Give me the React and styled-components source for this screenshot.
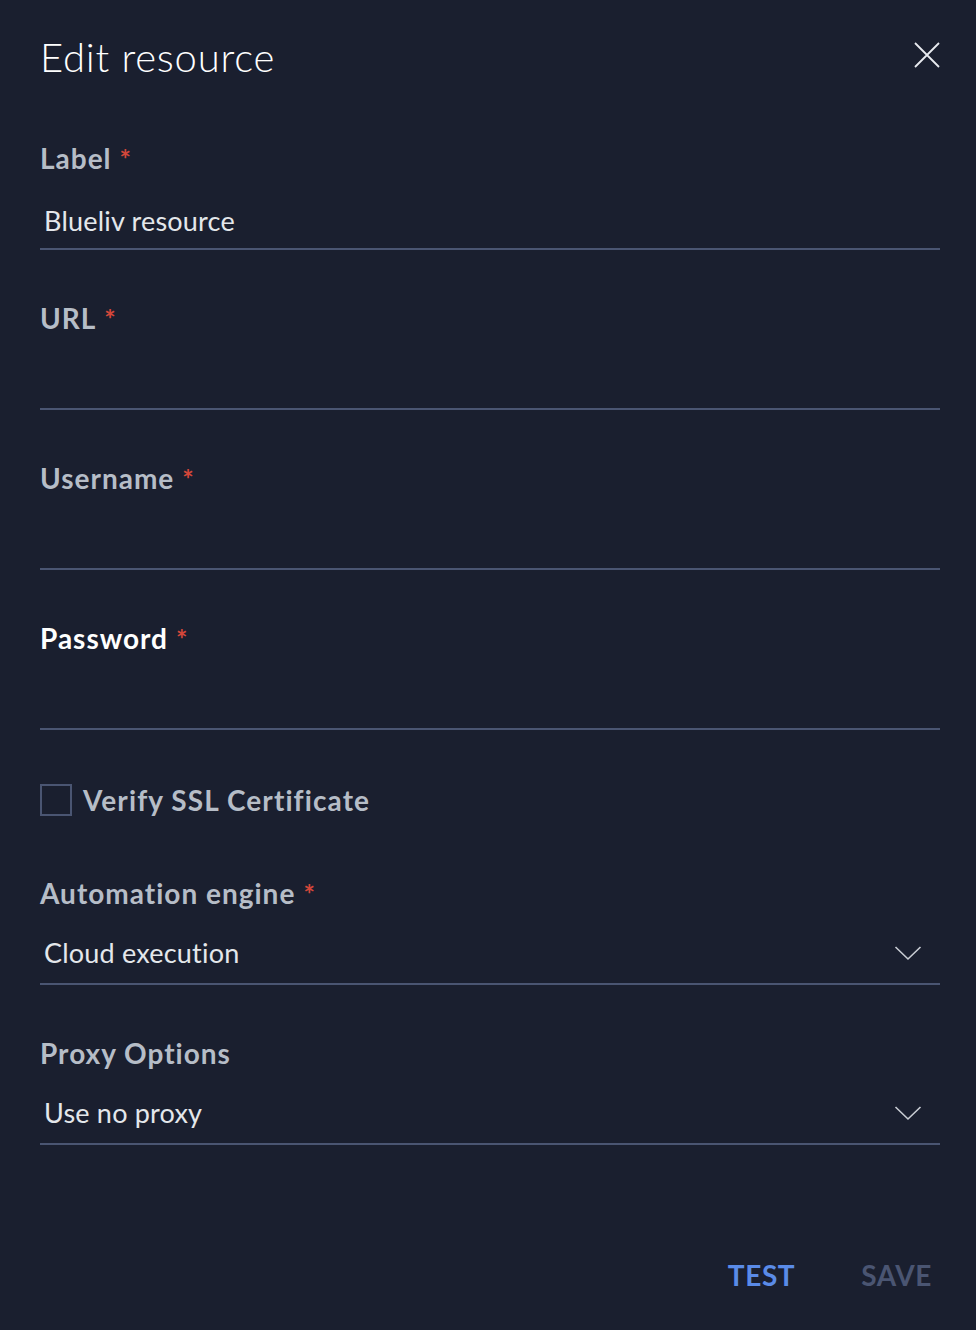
import styled, { createGlobalStyle } from "styled-components";

const GlobalStyle = createGlobalStyle`
  html, body {
    margin: 0;
    padding: 0;
    background: #1a1f2f;
  }
  * {
    box-sizing: border-box;
  }
`;

const Dialog = styled.div`
  width: 976px;
  min-height: 1330px;
  background: #1a1f2f;
  padding: 38px 36px 0 40px;
  font-family: Lato, "Liberation Sans", sans-serif;
  color: #e4e7eb;
`;

const Header = styled.div`
  display: flex;
  justify-content: space-between;
  align-items: center;
  height: 40px;
  margin-bottom: 64px;
`;

const Title = styled.h1`
  margin: 0 0 2px;
  font-size: 40px;
  font-weight: 300;
  line-height: 40px;
  color: #ffffff;
  letter-spacing: 0.75px;
`;

const CloseButton = styled.button`
  background: none;
  border: 0;
  padding: 0;
  margin: 0 -1px 6px 0;
  width: 28px;
  height: 28px;
  display: flex;
  align-items: center;
  justify-content: center;
  cursor: pointer;
`;

const Field = styled.div`
  display: flex;
  flex-direction: column;
  margin-bottom: ${(p) => p.$gap ?? 52}px;
`;

const Label = styled.label`
  font-size: 28px;
  line-height: 32px;
  height: 32px;
  font-weight: 700;
  color: ${(p) => (p.$active ? "#ffffff" : "#b6bdc7")};
  letter-spacing: 1px;
`;

const Required = styled.span`
  color: #d4473a;
  margin-left: 8px;
  font-size: 27px;
  font-weight: 700;
  letter-spacing: 0;
`;

const InputBox = styled.div`
  display: flex;
  align-items: center;
  justify-content: space-between;
  padding: ${(p) => (p.$select ? "27px 18px 13px 4px" : "30px 18px 10px 4px")};
  border-bottom: 2px solid #4a5572;
`;

const Value = styled.span`
  font-size: 27px;
  line-height: 34px;
  height: 34px;
  font-weight: 400;
  color: #e4e7eb;
  letter-spacing: 0.2px;
`;

const CheckRow = styled.label`
  display: flex;
  align-items: center;
  gap: 11px;
  margin-top: 54px;
  margin-bottom: 61px;
  height: 32px;
`;

const Box = styled.span`
  width: 32px;
  height: 32px;
  border: 2px solid #4a5572;
  display: inline-block;
`;

const CheckText = styled.span`
  font-size: 28px;
  font-weight: 700;
  color: #b6bdc7;
  letter-spacing: 1.1px;
`;

const Footer = styled.div`
  display: flex;
  justify-content: flex-end;
  gap: 50px;
  margin-top: 110px;
`;

const ActionButton = styled.button`
  background: none;
  border: 0;
  height: 40px;
  padding: 0 8px;
  font-family: inherit;
  font-size: 28px;
  font-weight: 700;
  letter-spacing: 0.6px;
  color: ${(p) => (p.$primary ? "#5a8be8" : "#4a5572")};
  cursor: pointer;
`;

const Chevron = () => (
  <svg width="28" height="16" viewBox="0 0 28 16" fill="none">
    <path d="M1.5 2 L14 14 L26.5 2" stroke="#c9cdd4" strokeWidth="1.6" />
  </svg>
);

const CloseIcon = () => (
  <svg width="26" height="26" viewBox="0 0 26 26" fill="none">
    <path d="M1 1 L25 25 M25 1 L1 25" stroke="#e8ebf0" strokeWidth="1.8" />
  </svg>
);

const fields = [
  { label: "Label", value: "Blueliv resource" },
  { label: "URL", value: "" },
  { label: "Username", value: "" },
  { label: "Password", value: "", active: true },
];

export default function App() {
  return (
    <>
      <GlobalStyle />
      <Dialog>
        <Header>
          <Title>Edit resource</Title>
          <CloseButton aria-label="Close">
            <CloseIcon />
          </CloseButton>
        </Header>

        {fields.map((f, i) => (
          <Field key={f.label} $gap={i === fields.length - 1 ? 0 : 52}>
            <Label $active={f.active}>
              {f.label}
              <Required>*</Required>
            </Label>
            <InputBox>
              <Value>{f.value}</Value>
            </InputBox>
          </Field>
        ))}

        <CheckRow>
          <Box />
          <CheckText>Verify SSL Certificate</CheckText>
        </CheckRow>

        <Field>
          <Label>
            Automation engine
            <Required>*</Required>
          </Label>
          <InputBox $select>
            <Value>Cloud execution</Value>
            <Chevron />
          </InputBox>
        </Field>

        <Field $gap={0}>
          <Label>Proxy Options</Label>
          <InputBox $select>
            <Value>Use no proxy</Value>
            <Chevron />
          </InputBox>
        </Field>

        <Footer>
          <ActionButton $primary>TEST</ActionButton>
          <ActionButton>SAVE</ActionButton>
        </Footer>
      </Dialog>
    </>
  );
}
